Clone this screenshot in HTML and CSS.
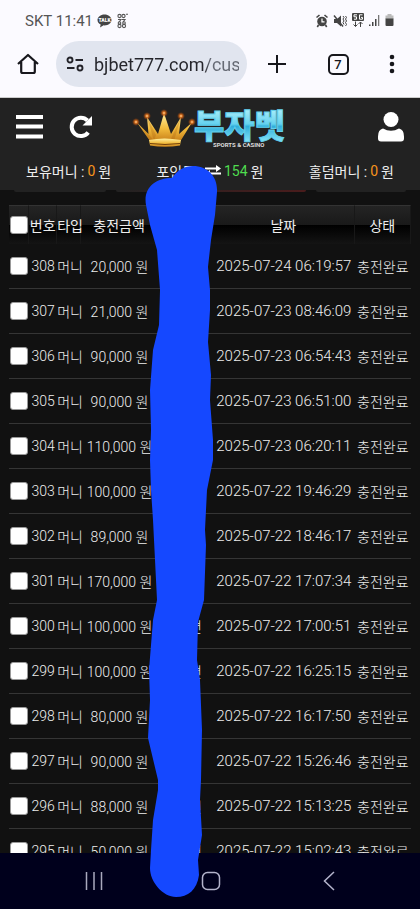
FILE: index.html
```html
<!DOCTYPE html>
<html lang="ko">
<head>
<meta charset="utf-8">
<meta name="viewport" content="width=device-width, initial-scale=1">
<title>부자벳</title>
<link rel="stylesheet" href="styles.css">
</head>
<body>
<div class="screen">
  <div class="status">
    <span>SKT 11:41</span>
    <svg class="status-talk" width="34" height="16" viewBox="0 0 34 16" aria-hidden="true">
      <path d="M7.500 1.500C3.500 1.500 .5 4 .5 7c0 2 1.300 3.600 3.200 4.500L3 14.500l3.600-2.200.9.100c4 0 7-2.400 7-5.400s-3-5.500-7-5.500z" fill="#444"/>
      <text x="7.500" y="9" class="talk-text">TALK</text>
      <g fill="none" stroke="#555" stroke-width="1.100"><circle cx="22.500" cy="3" r="1.600"/><circle cx="26.500" cy="3" r="1.600"/><path d="M21 6.500h3l-2 2.500M25 6.500h3l-2 2.500M29 1.200h2"/><circle cx="22.500" cy="10" r="1.300"/><circle cx="22.500" cy="13" r="1.600"/><circle cx="27" cy="10" r="1.300"/><circle cx="27" cy="13" r="1.600"/></g>
    </svg>
    <svg class="status-right" width="80" height="16" viewBox="0 0 80 16" aria-hidden="true">
      <g fill="#444">
        <circle cx="6" cy="8.500" r="4.800"/><path d="M.5 4.500L3.500 2M11.500 4.500L8.500 2M2.500 12l-1.200 2M9.500 12l1.200 2" stroke="#444" stroke-width="1.600"/>
        <path d="M6 5.500v3.300h2.500" fill="none" stroke="#fff" stroke-width="1.200"/>
        <path d="M18 6h3l4-3.500v11L21 10h-3z"/><path d="M18 2.500l9 11" stroke="#444" stroke-width="1.400"/>
        <path d="M27 3l1 1.500-1 1.500 1 2-1 1.500 1 2M29.500 3l1 1.500-1 1.500 1 2-1 1.500 1 2-1 1.500" fill="none" stroke="#444"/>
        <rect x="36" width="12" height="8" rx="1"/>
        <path d="M41 1.800h-3v2h2.500v2.400H38M46.500 1.800h-3v4.400h3V4.400H45" fill="none" stroke="#fff"/>
        <path d="M39.500 8.500v5M37.500 11.500l2 2 2-2M44.500 14V9M42.500 11l2-2 2 2" fill="none" stroke="#444"/>
        <path d="M53 11.500h1.500V13H53zM56 9h1.500v4H56zM59 6h1.500v7H59z"/><path d="M62 2h1.300v11H62z" fill="#777"/>
        <path d="M71.500 1h4v1.500h2V6h-8V2.500h2z" fill="#bbb"/><path d="M69.500 5.500h8V12a1 1 0 0 1-1 1h-6a1 1 0 0 1-1-1z"/>
      </g>
    </svg>
  </div>

  <div class="browser">
    <button class="icon-btn" aria-label="홈">
      <svg width="24" height="24" viewBox="0 0 24 24"><path d="M2 12L12 3l10 9M5.200 10v9.500a1.500 1.500 0 0 0 1.500 1.500h10.600a1.500 1.500 0 0 0 1.500-1.500V10" fill="none" stroke="#17171c" stroke-width="2.200" stroke-linejoin="round"/></svg>
    </button>
    <div class="address">
      <svg width="18" height="16" viewBox="0 0 18 16" aria-hidden="true"><g fill="none" stroke="#222228" stroke-width="1.900"><circle cx="4" cy="4" r="2.500"/><path d="M9.500 4H17M1 12h7.500"/><circle cx="14" cy="12" r="2.500"/></g></svg>
      <input class="url" type="text" aria-label="주소" value="bjbet777.com/cus">
    </div>
    <div class="browser-actions">
      <button class="icon-btn" aria-label="새 탭">
        <svg width="20" height="20" viewBox="0 0 20 20"><path d="M10 1v18M1 10h18" stroke="#17171c" stroke-width="2"/></svg>
      </button>
      <button class="icon-btn" aria-label="탭"><span class="tab-count">7</span></button>
      <button class="icon-btn" aria-label="메뉴">
        <svg width="6" height="20" viewBox="0 0 6 20"><g fill="#17171c"><circle cx="3" cy="3" r="2.300"/><circle cx="3" cy="10" r="2.300"/><circle cx="3" cy="17" r="2.300"/></g></svg>
      </button>
    </div>
  </div>

  <header class="site">
    <div class="site-left">
      <button class="icon-btn" aria-label="전체 메뉴"><svg width="27" height="24" viewBox="0 0 27 24"><path d="M0 2h27M0 11.500h27M0 21.500h27" stroke="#fff" stroke-width="4"/></svg></button>
      <button class="icon-btn" aria-label="새로고침"><svg width="24" height="24" viewBox="0 0 24 24"><path d="M19.200 17.500A9.200 9.200 0 1 1 18.500 5.500" fill="none" stroke="#fff" stroke-width="4"/><path d="M23 1v9.500h-9.500z" fill="#fff"/></svg></button>
    </div>
    <a class="logo" href="#" aria-label="부자벳">
      <svg width="156" height="44" viewBox="0 0 156 44">
        <defs>
          <linearGradient id="gold" x2="0" y2="1"><stop offset="0" stop-color="#fff0a0"/><stop offset=".55" stop-color="#f2bb3c"/><stop offset="1" stop-color="#c9811a"/></linearGradient>
          <linearGradient id="ice" x2="0" y2="1"><stop offset=".15" stop-color="#b5f2fb"/><stop offset=".5" stop-color="#65d2ef"/><stop offset=".55" stop-color="#2faedb"/><stop offset=".9" stop-color="#8ce8fa"/></linearGradient>
          <radialGradient id="glow"><stop offset="0" stop-color="#ffe3b0"/><stop offset=".3" stop-color="#e77a22"/><stop offset="1" stop-color="#a03b00" stop-opacity="0"/></radialGradient>
        </defs>
        <g transform="translate(0 4)">
          <path d="M5 13.500L16.500 25 15 8l11 17L32 4l7 21L49 8l-2 17L60 13.500 48.500 32H18z" fill="url(#gold)"/>
          <path d="M5 13.500L18 27l4 5h-4zM15 8l9 18-2 6zM49 8l-7 24h-4z" fill="#a96312" opacity=".3"/>
          <path d="M17 31q15-3 32 0l-1 5.500q-15 2.500-30 0z" fill="url(#gold)"/><path d="M18 34.500q15 2 30 0" fill="none" stroke="#744008"/>
          <g fill="url(#glow)"><circle cx="4" cy="13" r="4"/><circle cx="15" cy="7" r="4"/><circle cx="32" cy="4" r="4"/><circle cx="49" cy="7" r="4"/><circle cx="60" cy="13" r="4"/></g>
        </g>
        <text x="62" y="33" class="logo-name">부자벳</text>
        <text x="81" y="42" class="logo-sub">SPORTS &amp; CASINO</text>
      </svg>
    </a>
    <button class="icon-btn" aria-label="내 정보"><svg width="26" height="30" viewBox="0 0 26 30"><circle cx="13" cy="7.500" r="7.500" fill="#fff"/><path d="M5 16.500q8 4.500 16 0 5 1 5 8v2a3 3 0 0 1-3 3H3a3 3 0 0 1-3-3v-2q0-7 5-8z" fill="#fff"/></svg></button>
  </header>

  <div class="money">
    <span>보유머니 : <b class="orange">0</b> 원</span>
    <span>포인트 :
      <svg width="16" height="12" viewBox="0 0 16 12" aria-hidden="true"><path d="M0 3.500h12M4 8.500h12" stroke="#fff" stroke-width="2"/><path d="M11 0l5 3.500L11 7zM5 5L0 8.500 5 12z" fill="#fff"/></svg>
      <b class="green">154</b> 원</span>
    <span>홀덤머니 : <b class="orange">0</b> 원</span>
  </div>
  <div class="money-edge"><i></i><i class="active"></i><i></i></div>

  <main class="content">
    <table class="history">
      <colgroup><col class="c-check"><col class="c-no"><col class="c-type"><col class="c-amount"><col class="c-name"><col class="c-date"><col class="c-state"></colgroup>
      <thead><tr><th><input type="checkbox" aria-label="전체 선택"></th><th>번호</th><th>타입</th><th>충전금액</th><th></th><th>날짜</th><th>상태</th></tr></thead>
      <tbody>
        <tr><td><input type="checkbox" aria-label="308"></td><td>308</td><td>머니</td><td>20,000 원</td><td></td><td>2025-07-24 06:19:57</td><td>충전완료</td></tr>
        <tr><td><input type="checkbox" aria-label="307"></td><td>307</td><td>머니</td><td>21,000 원</td><td></td><td>2025-07-23 08:46:09</td><td>충전완료</td></tr>
        <tr><td><input type="checkbox" aria-label="306"></td><td>306</td><td>머니</td><td>90,000 원</td><td></td><td>2025-07-23 06:54:43</td><td>충전완료</td></tr>
        <tr><td><input type="checkbox" aria-label="305"></td><td>305</td><td>머니</td><td>90,000 원</td><td></td><td>2025-07-23 06:51:00</td><td>충전완료</td></tr>
        <tr><td><input type="checkbox" aria-label="304"></td><td>304</td><td>머니</td><td>110,000 원</td><td></td><td>2025-07-23 06:20:11</td><td>충전완료</td></tr>
        <tr><td><input type="checkbox" aria-label="303"></td><td>303</td><td>머니</td><td>100,000 원</td><td></td><td>2025-07-22 19:46:29</td><td>충전완료</td></tr>
        <tr><td><input type="checkbox" aria-label="302"></td><td>302</td><td>머니</td><td>89,000 원</td><td></td><td>2025-07-22 18:46:17</td><td>충전완료</td></tr>
        <tr><td><input type="checkbox" aria-label="301"></td><td>301</td><td>머니</td><td>170,000 원</td><td></td><td>2025-07-22 17:07:34</td><td>충전완료</td></tr>
        <tr><td><input type="checkbox" aria-label="300"></td><td>300</td><td>머니</td><td>100,000 원</td><td>면</td><td>2025-07-22 17:00:51</td><td>충전완료</td></tr>
        <tr><td><input type="checkbox" aria-label="299"></td><td>299</td><td>머니</td><td>100,000 원</td><td>면</td><td>2025-07-22 16:25:15</td><td>충전완료</td></tr>
        <tr><td><input type="checkbox" aria-label="298"></td><td>298</td><td>머니</td><td>80,000 원</td><td></td><td>2025-07-22 16:17:50</td><td>충전완료</td></tr>
        <tr><td><input type="checkbox" aria-label="297"></td><td>297</td><td>머니</td><td>90,000 원</td><td></td><td>2025-07-22 15:26:46</td><td>충전완료</td></tr>
        <tr><td><input type="checkbox" aria-label="296"></td><td>296</td><td>머니</td><td>88,000 원</td><td>인</td><td>2025-07-22 15:13:25</td><td>충전완료</td></tr>
        <tr><td><input type="checkbox" aria-label="295"></td><td>295</td><td>머니</td><td>50,000 원</td><td>면</td><td>2025-07-22 15:02:43</td><td>충전완료</td></tr>
      </tbody>
    </table>
  </main>

  <nav class="system">
    <button class="icon-btn" aria-label="최근 앱"><svg width="20" height="20" viewBox="0 0 20 20"><path d="M2.500 1v18M10 1v18M17.500 1v18" stroke="#a9a9bd" stroke-width="1.500"/></svg></button>
    <button class="icon-btn" aria-label="홈 화면"><svg width="20" height="20" viewBox="0 0 20 20"><rect x="1.500" y="1.500" width="17" height="17" rx="5" fill="none" stroke="#b4b4cc" stroke-width="1.500"/></svg></button>
    <button class="icon-btn" aria-label="뒤로"><svg width="20" height="20" viewBox="0 0 20 20"><path d="M15 1L5.500 10l9.500 9" fill="none" stroke="#b4b4cc" stroke-width="1.500"/></svg></button>
  </nav>

  <svg class="marker" width="74" height="733" viewBox="145 165 74 733" aria-hidden="true">
    <path fill="#1548ff" d="M146 205C143 188 155 178 172 178C177 170 185 166 193 166C208 166 218 177 217 192L215 215 211 240 208 267 210 290 210 310 208 342 211 375 210 400 213 440 213 460 207 490 205 530 206 545 204 600 198 622 197 660 200 680 202 730 201 780 200 800 202 835 198 860 199 875C197 890 188 897 176 897C163 897 150 882 150 868L151 850 153 820 158 790 158 780 148 738 150 700 149 670 153 620 157 600 155 560 153 520 151 490 150 460 151 430 150 390 153 350 159 325 160 290 157 250 150 225Z"/>
  </svg>
</div>
</body>
</html>
```
FILE: styles.css
```css
* { box-sizing: border-box; }

body {
  margin: 0;
  background: #111;
  color: #eee;
  font-family: Roboto, "Noto Sans CJK KR", sans-serif;
  font-size: 14px;
}

button {
  padding: 0;
  border: 0;
  background: none;
  color: inherit;
  font: inherit;
}

svg { display: block; }

.screen {
  position: relative;
  display: flex;
  flex-direction: column;
  height: 100vh;
  overflow: hidden;
}

.status {
  display: flex;
  align-items: center;
  gap: 4px;
  height: 41px;
  padding: 0 24px 0 25px;
  background: #fbfaff;
  color: #555;
  font-size: 15px;
}

.status-right { margin-left: auto; }

.talk-text {
  fill: #fff;
  font-size: 5px;
  font-weight: 900;
  text-anchor: middle;
}

.browser {
  display: flex;
  align-items: center;
  height: 57px;
  padding: 0 25px 10px 16px;
  background: #fbfaff;
  border-bottom: 1px solid #ccc;
}

.browser-actions {
  display: flex;
  flex: 1 0 auto;
  align-items: center;
  justify-content: space-between;
  margin-left: 20px;
}

.icon-btn {
  display: flex;
  align-items: center;
  justify-content: center;
}

.address {
  display: flex;
  align-items: center;
  gap: 10px;
  flex: 0 1 191px;
  min-width: 0;
  height: 46px;
  margin-left: 16px;
  padding: 0 8px 0 10px;
  border-radius: 23px;
  background: #e1e5ef;
}

.url {
  flex: 1;
  min-width: 0;
  padding: 0;
  border: 0;
  background: linear-gradient(90deg, #25252b 76%, #666a74 80%);
  background-clip: text;
  -webkit-background-clip: text;
  color: transparent;
  font-family: inherit;
  font-size: 18px;
}

.tab-count {
  display: grid;
  place-items: center;
  width: 21px;
  height: 21px;
  border: 2px solid #17171c;
  border-radius: 5px;
  color: #17171c;
  font-size: 13px;
  font-weight: 500;
}

.site {
  display: grid;
  grid-template-columns: 1fr auto 1fr;
  align-items: center;
  height: 58px;
  padding: 0 16px;
  background: #222;
}

.site-left {
  display: flex;
  gap: 26px;
}

.site > .icon-btn { justify-self: end; }

.logo-name {
  fill: url(#ice);
  stroke: #62cfec;
  stroke-width: 1;
  font-family: "Noto Sans CJK KR", sans-serif;
  font-size: 33px;
  font-weight: 900;
}

.logo-sub {
  fill: #ddd;
  font-size: 6px;
  font-weight: 700;
}

.money {
  display: flex;
  justify-content: space-between;
  align-items: center;
  height: 34px;
  padding: 0 26px 4px;
  background: #222;
  white-space: nowrap;
}

.money span {
  display: flex;
  align-items: center;
  gap: 3px;
}

.money b { font-weight: 400; }
.orange { color: #f7941d; }
.green { color: #4fdc4f; }

.money-edge {
  display: grid;
  grid-template-columns: 92fr 190fr 90fr;
  gap: 10px;
  padding: 0 14px;
}

.money-edge i {
  height: 2px;
  background: #222;
  border-radius: 0 0 2px 2px;
}

.money-edge .active { background: linear-gradient(90deg, #222, #4a1c1c); }

.content {
  flex: 1;
  min-height: 0;
  padding: 13px 9px 0;
  overflow: hidden;
  background: #111;
}

.history {
  width: 100%;
  table-layout: fixed;
  border-collapse: separate;
  border-spacing: 0;
}

.c-check { width: 5%; }
.c-no { width: 7%; }
.c-type { width: 6%; }
.c-amount { width: 19%; }
.c-name { width: 13%; }
.c-date { width: 36%; }
.c-state { width: 14%; }

.history th,
.history td {
  padding: 0;
  font-weight: 300;
  text-align: center;
  white-space: nowrap;
}

.history th {
  height: 39px;
  border-top: 1px solid #333;
  border-right: 1px solid #181818;
  background: linear-gradient(#242424, #191919 50%, #000 51%, #141414);
  font-weight: 400;
}

.history td {
  height: 45px;
  border-bottom: 1px solid #353535;
}

.history td:nth-child(5) {
  padding-right: 8px;
  text-align: right;
}

.history td:nth-child(6) { font-size: 15px; }

.history th:nth-child(6),
.history td:nth-child(6) { padding-left: 3px; }

.history input {
  display: block;
  appearance: none;
  width: 18px;
  height: 18px;
  margin: 0 auto;
  border: 1px solid #999;
  border-radius: 3px;
  background: #fff;
}

.system {
  display: grid;
  grid-template-columns: repeat(3, 1fr);
  align-items: center;
  height: 56px;
  padding: 0 32px 0 35px;
  background: #00001c;
}

.marker {
  position: absolute;
  top: 165px;
  left: 145px;
}
```
